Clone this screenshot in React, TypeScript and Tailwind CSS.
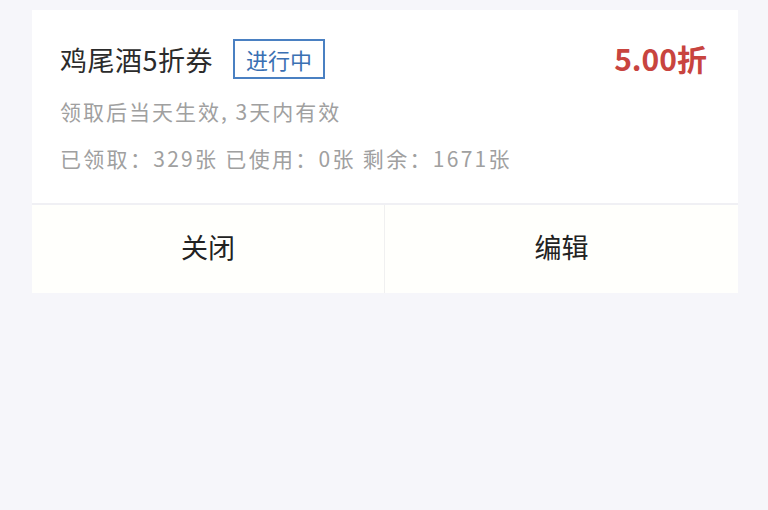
export default function App() {
  const font = { fontFamily: '"Noto Sans CJK SC", "Noto Sans", sans-serif' };
  return (
    <div className="min-h-[510px] bg-[#f6f6fa] pt-[10px] px-[32px]" style={font}>
      <div className="w-[706px] bg-white">
        <div className="pl-[28px] pr-[31px] pt-[29px] pb-[30px]">
          <div className="flex items-center justify-between h-[40px]">
            <div className="flex items-center">
              <span className="text-[27px] tracking-[0.5px] leading-none text-[#2b2b2b]">鸡尾酒5折券</span>
              <span className="ml-[20px] h-[40px] px-[11px] flex items-center border-2 border-[#4a80c2] text-[#3a70b3] text-[22px] leading-none">
                进行中
              </span>
            </div>
            <span className="text-[30px] font-bold leading-none text-[#c8443f] -mt-[3px]">5.00折</span>
          </div>
          <div className="mt-[17px] h-[30px] leading-[30px] text-[21px] tracking-[2px] text-[#a0a0a0]">
            领取后当天生效, 3天内有效
          </div>
          <div className="mt-[17px] h-[30px] leading-[30px] text-[21px] tracking-[2.3px] text-[#a0a0a0]">
            已领取：329张 已使用：0张 剩余：1671张
          </div>
        </div>
        <div className="h-[2px] bg-[#f0f0f4]" />
        <div className="grid grid-cols-2 h-[88px] bg-[#fffffc]">
          <div className="flex items-center justify-center pb-[4px] border-r border-[#f0f0f0] text-[27px] text-[#222]">关闭</div>
          <div className="flex items-center justify-center pb-[4px] text-[27px] text-[#222]">编辑</div>
        </div>
      </div>
    </div>
  );
}
